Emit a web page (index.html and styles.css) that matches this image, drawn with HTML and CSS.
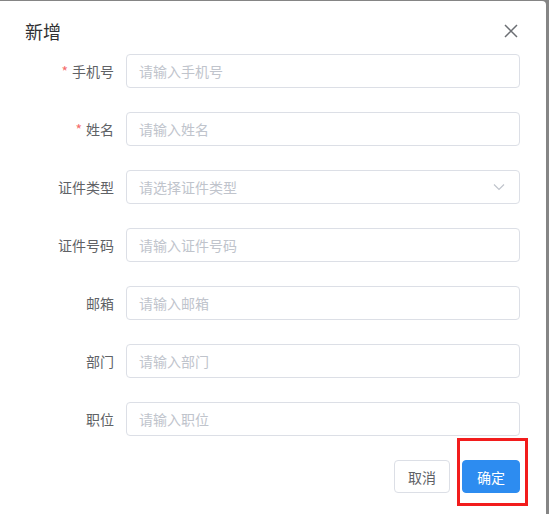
FILE: index.html
```html
<!DOCTYPE html>
<html lang="zh-CN">
<head>
<meta charset="utf-8">
<link rel="stylesheet" href="styles.css">
</head>
<body>
<div class="dialog">
  <div class="dialog-header">
    <span class="dialog-title">新增</span>
    <span class="dialog-close">
      <svg width="14" height="14" viewBox="0 0 14 14"><path d="M1 1 L13 13 M13 1 L1 13" stroke="#6b6e73" stroke-width="1.5" fill="none"/></svg>
    </span>
  </div>
  <div class="dialog-body">
    <div class="form-item">
      <label class="form-label"><span class="req">*</span>手机号</label>
      <div class="input">请输入手机号</div>
    </div>
    <div class="form-item">
      <label class="form-label"><span class="req">*</span>姓名</label>
      <div class="input">请输入姓名</div>
    </div>
    <div class="form-item">
      <label class="form-label">证件类型</label>
      <div class="input select">请选择证件类型
        <svg class="arrow" width="12" height="8" viewBox="0 0 12 8"><path d="M1 1.5 L6 6.5 L11 1.5" stroke="#c0c4cc" stroke-width="1.2" fill="none"/></svg>
      </div>
    </div>
    <div class="form-item">
      <label class="form-label">证件号码</label>
      <div class="input">请输入证件号码</div>
    </div>
    <div class="form-item">
      <label class="form-label">邮箱</label>
      <div class="input">请输入邮箱</div>
    </div>
    <div class="form-item">
      <label class="form-label">部门</label>
      <div class="input">请输入部门</div>
    </div>
    <div class="form-item">
      <label class="form-label">职位</label>
      <div class="input">请输入职位</div>
    </div>
  </div>
  <div class="dialog-footer">
    <button class="btn">取消</button>
    <button class="btn btn-primary">确定</button>
  </div>
</div>
<div class="annotation"></div>
</body>
</html>
```
FILE: styles.css
```css
html, body {
  margin: 0;
  padding: 0;
}
body {
  background: #858585;
  height: 514px;
  overflow: hidden;
  font-family: "Noto Sans CJK SC", "Noto Sans", sans-serif;
  padding-top: 1px;
  box-sizing: border-box;
}
.dialog {
  width: 546px;
  height: 520px;
  background: #fff;
  border-radius: 0 4px 4px 0;
  box-sizing: border-box;
}
.dialog-header {
  display: flex;
  justify-content: space-between;
  align-items: center;
  padding: 18px 28px 0 25px;
  height: 24px;
  box-sizing: content-box;
}
.dialog-title {
  font-size: 18px;
  line-height: 24px;
  color: #303133;
}
.dialog-close {
  display: flex;
  width: 14px;
  height: 14px;
}
.dialog-body {
  padding: 11px 26px 0 0;
}
.form-item {
  display: flex;
  align-items: center;
  height: 34px;
  margin-bottom: 24px;
}
.form-item:last-child {
  margin-bottom: 0;
}
.form-label {
  width: 126px;
  padding-right: 12px;
  box-sizing: border-box;
  text-align: right;
  font-size: 14px;
  color: #606266;
}
.req {
  color: #f56c6c;
  margin-right: 4px;
}
.input {
  flex: 1;
  height: 34px;
  border: 1px solid #dcdfe6;
  border-radius: 4px;
  box-sizing: border-box;
  padding: 0 12px;
  font-size: 14px;
  line-height: 32px;
  color: #c0c4cc;
  display: flex;
  align-items: center;
}
.select {
  justify-content: space-between;
}
.arrow {
  margin-right: 2px;
}
.dialog-footer {
  display: flex;
  justify-content: flex-end;
  gap: 12px;
  padding: 24px 26px 0 0;
}
.btn {
  height: 33px;
  padding: 0 13px;
  font-family: inherit;
  font-size: 14px;
  color: #606266;
  background: #fff;
  border: 1px solid #dcdfe6;
  border-radius: 4px;
}
.btn-primary {
  background: #2d8cf0;
  border-color: #2d8cf0;
  color: #fff;
  padding: 0 14px;
}
.annotation {
  position: absolute;
  left: 457px;
  top: 438px;
  width: 71px;
  height: 68px;
  border: 3px solid #f21c1c;
  box-sizing: border-box;
}
```
